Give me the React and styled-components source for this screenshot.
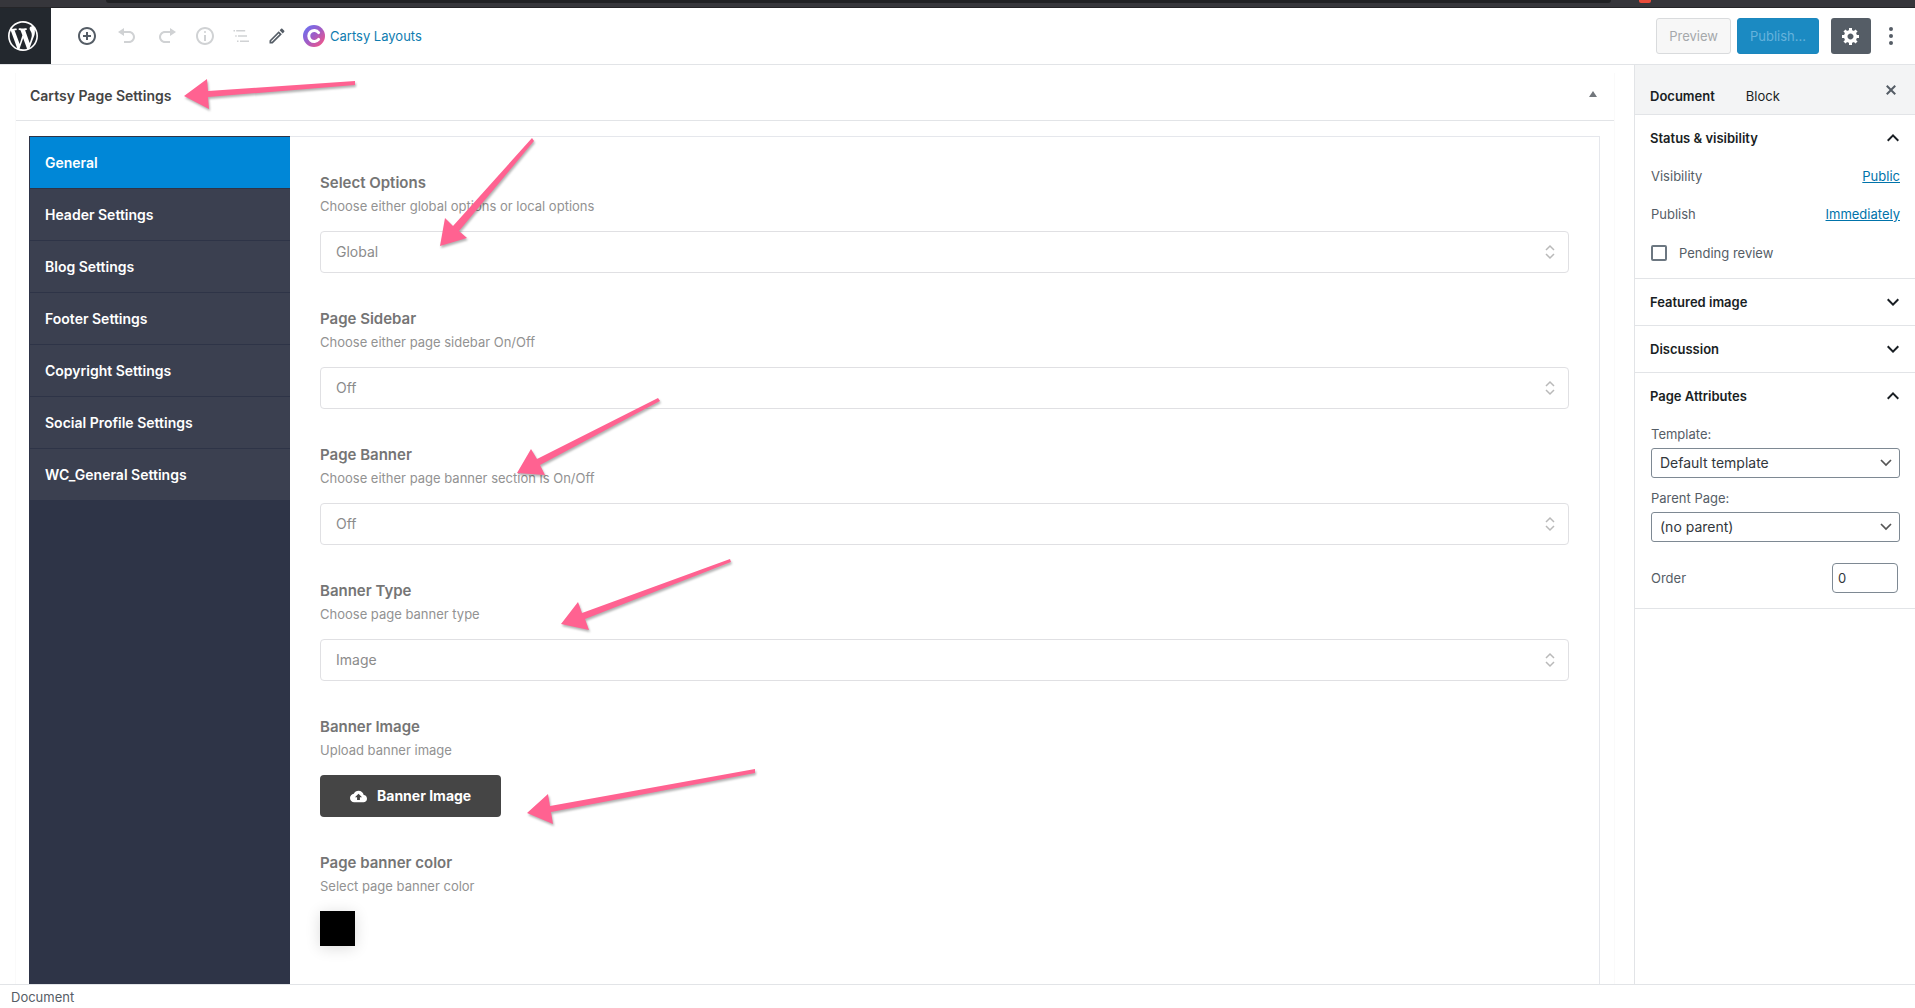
import React, { useState } from "react";
import styled, { createGlobalStyle, css } from "styled-components";

const Global = createGlobalStyle`
  *, *::before, *::after { box-sizing: border-box; }
  html, body, #root { height: 100%; }
  body {
    margin: 0;
    background: #fff;
    color: #555d66;
    font: 400 13px/20px Inter, "Liberation Sans", sans-serif;
    overflow: hidden;
  }
  button, input, select { font: inherit; margin: 0; }
  h1, h2, h3, p { margin: 0; }
`;

const Page = styled.div`
  position: relative;
  display: flex;
  flex-direction: column;
  height: 100vh;
`;

/* ---------- browser edge ---------- */

const BrowserEdge = styled.div`
  display: flex;
  flex: none;
  height: 8px;
  padding: 0 304px 0 106px;
  background: #36363b;
  border-bottom: 1px solid #252528;
`;

const AddressBar = styled.div`
  flex: 1;
  height: 3px;
  background: #202124;
  border-radius: 0 0 8px 8px;
`;

const ExtensionBadge = styled.div`
  width: 12px;
  height: 3px;
  margin: 0 -40px 0 28px;
  background: #ea4c3b;
  border-radius: 0 0 2px 2px;
`;

/* ---------- top bar ---------- */

const TopBar = styled.header`
  display: flex;
  flex: none;
  align-items: center;
  height: 57px;
  padding-right: 10px;
  border-bottom: 1px solid #e2e4e7;
`;

const HomeLink = styled.a`
  display: flex;
  align-items: center;
  align-self: stretch;
  width: 51px;
  padding-left: 8px;
  color: #fff;
  background: #23282e;
`;

const Tools = styled.div`
  display: flex;
  gap: ${(p) => p.$gap}px;
  margin-left: ${(p) => p.$start}px;
`;

const IconButton = styled.button`
  display: flex;
  align-items: center;
  justify-content: center;
  width: ${(p) => p.$width || 36}px;
  height: 36px;
  padding: 0;
  border: 0;
  border-radius: 3px;
  background: ${(p) => (p.$active ? "#555d66" : "transparent")};
  color: ${(p) => (p.$active ? "#fff" : "#555d66")};

  &:disabled { color: #d0d2d4; }
`;

const LayoutsLink = styled.a`
  display: flex;
  align-items: center;
  gap: 5px;
  margin-left: 8px;
  color: #0e7cb0;
  text-decoration: none;
`;

const Actions = styled.div`
  display: flex;
  gap: 6px;
  margin-left: auto;
`;

const TextButton = styled.button`
  height: 36px;
  padding: 0 12px;
  border: 1px solid #d9dbdd;
  border-radius: 3px;
  background: #f7f7f7;
  color: #a5a8ab;

  ${(p) => p.$primary && css`
    margin-right: 6px;
    border-color: #1b87be;
    background: #1b8ac2;
    color: #66b3dc;
  `}
`;

/* ---------- main area ---------- */

const Body = styled.div`
  display: flex;
  flex: 1;
  min-height: 0;
`;

const Editor = styled.main`
  flex: 1;
  min-width: 0;
  padding: 8px 19px 0 15px;
  overflow: hidden;
`;

const MetaBox = styled.section`
  display: flex;
  flex-direction: column;
  min-height: 100%;
  border: solid #fafafa;
  border-width: 0 1px;
`;

const MetaHead = styled.div`
  display: flex;
  flex: none;
  align-items: center;
  justify-content: space-between;
  height: 48px;
  padding: 0 10px 2px 14px;
  border-bottom: 1px solid #e2e4e7;
`;

const MetaTitle = styled.h2`
  color: #444;
  font-size: 14px;
  font-weight: 600;
`;

const Toggle = styled.button`
  display: flex;
  align-items: center;
  justify-content: center;
  width: 22px;
  height: 36px;
  padding: 0 0 4px;
  border: 0;
  background: none;
  color: #72777c;
`;

const Settings = styled.div`
  display: flex;
  flex: 1;
  margin: 15px 14px 0 13px;
  border: solid #e5e7ec;
  border-width: 1px 1px 0 0;
`;

const Tabs = styled.nav`
  width: 261px;
  margin-top: -1px;
  border: solid #2e3447;
  border-width: 1px 0 0 1px;
  background: #2e3447;
`;

const Tab = styled.button`
  display: block;
  width: 100%;
  height: 52px;
  padding: 0 15px;
  border: 0;
  border-bottom: 1px solid #2e3447;
  background: ${(p) => (p.$current ? "#0087d7" : "#3b4050")};
  color: #fff;
  font-size: 14px;
  font-weight: 600;
  text-align: left;
`;

const Fields = styled.div`
  display: flex;
  flex: 1;
  flex-direction: column;
  gap: 36px;
  min-width: 0;
  padding: 36px 30px 0;
`;

const FieldBox = styled.div`
  display: flex;
  flex-direction: column;
  align-items: flex-start;
`;

const FieldLabel = styled.label`
  color: #757575;
  font-size: 15px;
  font-weight: 600;
`;

const Hint = styled.p`
  margin: 3px 0 15px;
  color: #929292;
`;

const SelectWrap = styled.div`
  display: grid;
  align-items: center;
  width: 100%;

  > * { grid-area: 1 / 1; }
  > svg {
    justify-self: end;
    margin-right: ${(p) => p.$inset}px;
    pointer-events: none;
  }
`;

const WideSelect = styled.select`
  width: 100%;
  height: 42px;
  padding: 0 15px;
  border: 1px solid #e0e0e3;
  border-radius: 4px;
  background: #fff;
  color: #8b8b8b;
  font-size: 14px;
  appearance: none;
`;

const UploadButton = styled.button`
  display: flex;
  align-items: center;
  gap: 10px;
  height: 42px;
  padding: 0 30px;
  border: 0;
  border-radius: 4px;
  background: #454545;
  color: #fff;
  font-size: 14px;
  font-weight: 700;
`;

const Swatch = styled.button`
  width: 35px;
  height: 35px;
  border: 0;
  background: #000;
  box-shadow: 0 2px 15px rgba(0, 0, 0, 0.14);
`;

/* ---------- document sidebar ---------- */

const Sidebar = styled.aside`
  width: 281px;
  border-left: 1px solid #e2e4e7;
`;

const SideHead = styled.div`
  display: flex;
  height: 50px;
  padding: 0 6px 0 15px;
  border-bottom: 1px solid #e2e4e7;
  background: #f3f4f5;
`;

const SideTab = styled.button`
  align-self: flex-start;
  height: 36px;
  margin: 13px 31px 0 0;
  padding: 0;
  border: 0;
  background: none;
  color: #191e23;
  font-weight: ${(p) => (p.$current ? 600 : 400)};
`;

const CloseSlot = styled.div`
  margin: 7px 0 0 auto;
`;

const Panel = styled.section`
  border-bottom: 1px solid #e2e4e7;
`;

const PanelTitle = styled.button`
  display: flex;
  align-items: center;
  justify-content: space-between;
  width: 100%;
  height: 46px;
  padding: 0 10px 0 15px;
  border: 0;
  background: none;
  color: #191e23;
  font-weight: 600;
`;

const PanelBody = styled.div`
  display: flex;
  flex-direction: column;
  gap: ${(p) => p.$gap}px;
  padding: 5px 15px 15px 16px;
`;

const Row = styled.div`
  display: flex;
  align-items: center;
  justify-content: space-between;
`;

const RowLink = styled.a`
  color: #0073aa;
`;

const CheckRow = styled.label`
  display: flex;
  align-items: center;
  gap: 12px;
  height: 21px;
`;

const Check = styled.input`
  width: 16px;
  height: 16px;
  border: 2px solid #6c7781;
  border-radius: 2px;
  background: #fff;
  appearance: none;
`;

const Stack = styled.div`
  display: flex;
  flex-direction: column;
  gap: 4px;
`;

const SmallSelect = styled.select`
  width: 100%;
  height: 30px;
  padding: 0 8px;
  border: 1px solid #7e8993;
  border-radius: 3px;
  background: #fff;
  color: #32373c;
  font-size: 14px;
  appearance: none;
`;

const OrderRow = styled(Row)`
  margin-top: 11px;
`;

const OrderInput = styled.input`
  width: 66px;
  height: 30px;
  margin-right: 2px;
  padding: 0 5px;
  border: 1px solid #7e8993;
  border-radius: 4px;
  color: #32373c;
`;

const Footer = styled.footer`
  flex: none;
  height: 24px;
  padding: 2px 11px;
  border-top: 1px solid #e2e4e7;
`;

/* ---------- arrows over the page ---------- */

const ArrowLayer = styled.svg`
  position: absolute;
  top: 0;
  left: 0;
  pointer-events: none;
  filter: drop-shadow(1px 2px 1px rgba(0, 0, 0, 0.3));
`;

const paths = {
  add: "M10 1c-5 0-9 4-9 9s4 9 9 9 9-4 9-9-4-9-9-9zm0 16c-3.9 0-7-3.1-7-7s3.1-7 7-7 7 3.1 7 7-3.1 7-7 7zm1-11H9v3H6v2h3v3h2v-3h3V9h-3V6z",
  undo: "M12 5H7V2L1 6l6 4V7h5c2.2 0 4 1.8 4 4s-1.8 4-4 4H7v2h5c3.3 0 6-2.7 6-6s-2.7-6-6-6z",
  redo: "M8 5h5V2l6 4-6 4V7H8c-2.2 0-4 1.8-4 4s1.8 4 4 4h5v2H8c-3.3 0-6-2.7-6-6s2.7-6 6-6z",
  info: "M9 15h2V9H9v6zm1-10c-.5 0-1 .5-1 1s.5 1 1 1 1-.5 1-1-.5-1-1-1zm0-4c-5 0-9 4-9 9s4 9 9 9 9-4 9-9-4-9-9-9zm0 16c-3.9 0-7-3.1-7-7s3.1-7 7-7 7 3.1 7 7-3.1 7-7 7z",
  list: "M2.5 4H4v1.6H2.5zM5.2 4h9v1.6h-9zM4.2 9.2h1.5v1.6H4.2zM7 9.2h9v1.6H7zM6 14.4h1.5V16H6zM9 14.4h9V16H9z",
  edit: "M14.06 9.02l.92.92L5.92 19H5v-.92l9.06-9.06M17.66 3c-.25 0-.51.1-.7.29l-1.83 1.83 3.75 3.75 1.83-1.83c.39-.39.39-1.02 0-1.41l-2.34-2.34c-.2-.2-.45-.29-.71-.29zm-3.6 3.19L3 17.25V21h3.75L17.81 9.94l-3.75-3.75z",
  cog: "M18 12h-2.18c-.17.7-.44 1.35-.81 1.93l1.54 1.54-2.1 2.1-1.54-1.54c-.58.36-1.23.63-1.91.79V19H8v-2.18c-.68-.16-1.33-.43-1.91-.79l-1.54 1.54-2.12-2.12 1.54-1.54c-.36-.58-.63-1.23-.79-1.91H1V9.03h2.17c.16-.7.44-1.35.8-1.94L2.43 5.55l2.1-2.1 1.54 1.54c.58-.37 1.24-.64 1.93-.81V2h3v2.18c.68.16 1.33.43 1.91.79l1.54-1.54 2.12 2.12-1.54 1.54c.36.59.64 1.24.8 1.94H18V12zm-8.5 1.5c1.66 0 3-1.34 3-3s-1.34-3-3-3-3 1.34-3 3 1.34 3 3 3z",
  close: "M14.95 6.46L11.41 10l3.54 3.54-1.41 1.41L10 11.42l-3.53 3.53-1.42-1.42L8.58 10 5.05 6.47l1.42-1.42L10 8.58l3.54-3.53z",
  wordpress: "M20 10c0-5.51-4.49-10-10-10C4.48 0 0 4.49 0 10c0 5.52 4.48 10 10 10 5.51 0 10-4.48 10-10zM7.78 15.37L4.37 6.22c.55-.02 1.17-.08 1.17-.08.5-.06.44-1.13-.06-1.11 0 0-1.45.11-2.37.11-.18 0-.37 0-.58-.01C4.12 2.69 6.87 1.11 10 1.11c2.33 0 4.45.87 6.05 2.34-.68-.11-1.65.39-1.65 1.58 0 .74.45 1.36.9 2.1.35.61.55 1.36.55 2.46 0 1.49-1.4 5-1.4 5l-3.03-8.37c.54-.02.82-.17.82-.17.5-.05.44-1.25-.06-1.22 0 0-1.44.12-2.38.12-.87 0-2.33-.12-2.33-.12-.5-.03-.56 1.2-.06 1.22l.92.08 1.26 3.41zM17.41 10c.24-.64.74-1.87.43-4.25.7 1.29 1.05 2.71 1.05 4.25 0 3.29-1.73 6.24-4.4 7.78.97-2.59 1.94-5.2 2.92-7.78zM6.1 18.09C3.12 16.65 1.11 13.53 1.11 10c0-1.3.23-2.48.72-3.59C3.25 10.3 4.67 14.2 6.1 18.09zm4.03-6.63l2.58 6.98c-.86.29-1.76.45-2.71.45-.79 0-1.57-.11-2.29-.33.81-2.38 1.62-4.74 2.42-7.1z",
  up: "M12 8l-6 6 1.41 1.41L12 10.83l4.59 4.58L18 14z",
  down: "M7.41 8.59L12 13.17l4.59-4.58L18 10l-6 6-6-6z",
  cloud: "M19.35 10.04C18.67 6.59 15.64 4 12 4 9.11 4 6.6 5.64 5.35 8.04 2.34 8.36 0 10.91 0 14c0 3.31 2.69 6 6 6h13c2.76 0 5-2.24 5-5 0-2.64-2.05-4.78-4.65-4.96zM14 13v4h-4v-4H7l5-5 5 5h-3z",
};

const Icon = ({ name, size = 20, box = 20 }) => (
  <svg width={size} height={size} viewBox={`0 0 ${box} ${box}`} fill="currentColor" aria-hidden="true">
    <path d={paths[name]} />
  </svg>
);

const Dots = () => (
  <svg width="6" height="18" viewBox="0 0 6 18" fill="currentColor" aria-hidden="true">
    <circle cx="3" cy="2" r="2" />
    <circle cx="3" cy="9" r="2" />
    <circle cx="3" cy="16" r="2" />
  </svg>
);

const CartsyLogo = () => (
  <svg width="22" height="22" viewBox="0 0 22 22" aria-hidden="true">
    <defs>
      <linearGradient id="cartsy" x1="0" y1="0" x2="1" y2="1">
        <stop offset="0.1" stopColor="#6d6ff0" />
        <stop offset="0.5" stopColor="#a25cc4" />
        <stop offset="0.9" stopColor="#f0568a" />
      </linearGradient>
    </defs>
    <circle cx="11" cy="11" r="11" fill="url(#cartsy)" />
    <path d="M15.6 7.6A5.5 5.5 0 1 0 15.6 14.4" fill="none" stroke="#fff" strokeWidth="3" strokeLinecap="round" />
  </svg>
);

const UpDown = () => (
  <svg width="10" height="16" viewBox="0 0 10 16" fill="none" stroke="#b9b9b9" strokeWidth="1.5" aria-hidden="true">
    <path d="M1 6l4-4 4 4M1 10l4 4 4-4" />
  </svg>
);

const SmallChevron = () => (
  <svg width="12" height="8" viewBox="0 0 12 8" fill="none" stroke="#555" strokeWidth="1.7" aria-hidden="true">
    <path d="M1 1l5 5 5-5" />
  </svg>
);

const Triangle = () => (
  <svg width="8" height="6" viewBox="0 0 8 6" fill="currentColor" aria-hidden="true">
    <path d="M4 0l4 6H0z" />
  </svg>
);

const tabs = [
  "General",
  "Header Settings",
  "Blog Settings",
  "Footer Settings",
  "Copyright Settings",
  "Social Profile Settings",
  "WC_General Settings",
];

const selects = [
  { id: "options", label: "Select Options", hint: "Choose either global options or local options", values: ["Global", "Local"] },
  { id: "sidebar", label: "Page Sidebar", hint: "Choose either page sidebar On/Off", values: ["Off", "On"] },
  { id: "banner", label: "Page Banner", hint: "Choose either page banner section is On/Off", values: ["Off", "On"] },
  { id: "type", label: "Banner Type", hint: "Choose page banner type", values: ["Image", "Color"] },
];

const arrows = [
  "184,96 207,79 208,91 355,81 355,85 208,97 209,109",
  "440,246 445,218 453,226 532,138 534,141 459,231 467,238",
  "517,473 531,449 537,459 658,398 660,401 540,465 545,475",
  "561,624 578,602 582,613 730,559 731,562 585,619 589,630",
  "527,813 548,794 550,806 755,769 755,773 551,812 553,824",
];

const Field = ({ id, label, hint, children }) => (
  <FieldBox>
    <FieldLabel htmlFor={id}>{label}</FieldLabel>
    <Hint>{hint}</Hint>
    {children}
  </FieldBox>
);

const SidePanel = ({ title, open, children }) => (
  <Panel>
    <PanelTitle aria-expanded={!!open}>
      {title}
      <Icon name={open ? "up" : "down"} size={24} box={24} />
    </PanelTitle>
    {children}
  </Panel>
);

export default function App() {
  const [tab, setTab] = useState("General");

  return (
    <Page>
      <Global />
      <BrowserEdge>
        <AddressBar />
        <ExtensionBadge />
      </BrowserEdge>

      <TopBar>
        <HomeLink href="#" aria-label="View pages">
          <Icon name="wordpress" size={30} />
        </HomeLink>
        <Tools $gap={4} $start={18}>
          <IconButton aria-label="Add block"><Icon name="add" /></IconButton>
          <IconButton aria-label="Undo" disabled><Icon name="undo" /></IconButton>
          <IconButton aria-label="Redo" disabled><Icon name="redo" /></IconButton>
        </Tools>
        <Tools $gap={0} $start={2}>
          <IconButton aria-label="Content structure" disabled><Icon name="info" /></IconButton>
          <IconButton aria-label="Block navigation" disabled><Icon name="list" /></IconButton>
          <IconButton aria-label="Edit mode"><Icon name="edit" box={24} /></IconButton>
        </Tools>
        <LayoutsLink href="#">
          <CartsyLogo />
          Cartsy Layouts
        </LayoutsLink>
        <Actions>
          <TextButton disabled>Preview</TextButton>
          <TextButton $primary disabled>Publish...</TextButton>
          <IconButton $active $width={40} aria-label="Settings"><Icon name="cog" /></IconButton>
          <IconButton $width={28} aria-label="More tools"><Dots /></IconButton>
        </Actions>
      </TopBar>

      <Body>
        <Editor>
          <MetaBox>
            <MetaHead>
              <MetaTitle>Cartsy Page Settings</MetaTitle>
              <Toggle aria-label="Toggle panel"><Triangle /></Toggle>
            </MetaHead>
            <Settings>
              <Tabs>
                {tabs.map((name) => (
                  <Tab key={name} $current={name === tab} onClick={() => setTab(name)}>{name}</Tab>
                ))}
              </Tabs>
              <Fields>
                {selects.map(({ values, ...field }) => (
                  <Field key={field.id} {...field}>
                    <SelectWrap $inset={14}>
                      <WideSelect id={field.id}>
                        {values.map((value) => <option key={value}>{value}</option>)}
                      </WideSelect>
                      <UpDown />
                    </SelectWrap>
                  </Field>
                ))}
                <Field id="image" label="Banner Image" hint="Upload banner image">
                  <UploadButton id="image"><Icon name="cloud" size={17} box={24} />Banner Image</UploadButton>
                </Field>
                <Field id="color" label="Page banner color" hint="Select page banner color">
                  <Swatch id="color" />
                </Field>
              </Fields>
            </Settings>
          </MetaBox>
        </Editor>

        <Sidebar>
          <SideHead>
            <SideTab $current>Document</SideTab>
            <SideTab>Block</SideTab>
            <CloseSlot>
              <IconButton aria-label="Close settings"><Icon name="close" /></IconButton>
            </CloseSlot>
          </SideHead>
          <SidePanel title="Status & visibility" open>
            <PanelBody $gap={18}>
              <Row>Visibility<RowLink href="#">Public</RowLink></Row>
              <Row>Publish<RowLink href="#">Immediately</RowLink></Row>
              <CheckRow><Check type="checkbox" />Pending review</CheckRow>
            </PanelBody>
          </SidePanel>
          <SidePanel title="Featured image" />
          <SidePanel title="Discussion" />
          <SidePanel title="Page Attributes" open>
            <PanelBody $gap={10}>
              <Stack>
                <label htmlFor="template">Template:</label>
                <SelectWrap $inset={8}>
                  <SmallSelect id="template"><option>Default template</option></SmallSelect>
                  <SmallChevron />
                </SelectWrap>
              </Stack>
              <Stack>
                <label htmlFor="parent">Parent Page:</label>
                <SelectWrap $inset={8}>
                  <SmallSelect id="parent"><option>(no parent)</option></SmallSelect>
                  <SmallChevron />
                </SelectWrap>
              </Stack>
              <OrderRow>
                <label htmlFor="order">Order</label>
                <OrderInput id="order" defaultValue="0" />
              </OrderRow>
            </PanelBody>
          </SidePanel>
        </Sidebar>
      </Body>

      <Footer>Document</Footer>

      <ArrowLayer width="800" height="840" viewBox="0 0 800 840" fill="#ff6291" aria-hidden="true">
        {arrows.map((points) => <polygon key={points} points={points} />)}
      </ArrowLayer>
    </Page>
  );
}
